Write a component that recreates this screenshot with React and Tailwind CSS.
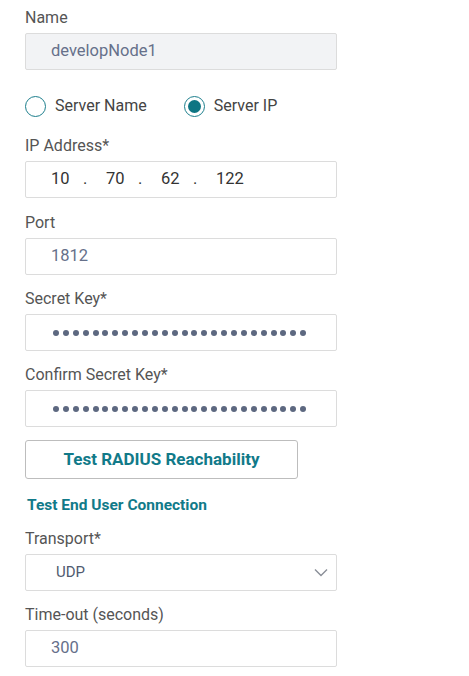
import React from "react";

const font = { fontFamily: "Roboto, 'Liberation Sans', sans-serif" };

function Label({ children }) {
  return <div className="h-5 text-[16px] leading-[23px] text-[#555]">{children}</div>;
}

function Field({ label, children, className = "" }) {
  return (
    <div className={`flex flex-col gap-[7px] ${className}`}>
      <Label>{label}</Label>
      {children}
    </div>
  );
}

function Box({ children, disabled = false, className = "" }) {
  return (
    <div
      className={`flex h-[37px] w-[312px] items-center rounded-[2px] border border-[#dcdcdc] pl-[25px] pr-3 text-[16.5px] ${
        disabled ? "bg-[#f2f3f5]" : "bg-white"
      } ${className}`}
    >
      {children}
    </div>
  );
}

function Radio({ checked, label }) {
  return (
    <label className="flex items-center gap-[9px]">
      <span className="flex h-[21px] w-[21px] items-center justify-center rounded-full border-[1.5px] border-[#1b7e8c]">
        {checked && <span className="h-[13px] w-[13px] rounded-full bg-[#0e7583]" />}
      </span>
      <span className="text-[16px] text-[#444]">{label}</span>
    </label>
  );
}

function Secret() {
  return (
    <Box>
      <div className="flex gap-[3.9px] pl-[2px]">
        {Array.from({ length: 26 }).map((_, i) => (
          <span key={i} className="h-[6px] w-[6px] rounded-full bg-[#5d6880]" />
        ))}
      </div>
    </Box>
  );
}

export default function App() {
  const ip = ["10", "70", "62", "122"];
  return (
    <div className="min-h-[676px] w-[469px] bg-white pl-[25px] pt-[6px]" style={font}>
      <Field label="Name">
        <Box disabled>
          <span className="text-[#66708a]">developNode1</span>
        </Box>
      </Field>

      <div className="mt-[24px] flex items-center gap-[37px]">
        <Radio label="Server Name" />
        <Radio checked label="Server IP" />
      </div>

      <Field label="IP Address*" className="mt-[16px]">
        <Box>
          <div className="flex text-[#333]">
            {ip.map((n, i) => (
              <div key={i} className="flex w-[55px]">
                <span className="w-[32px]">{n}</span>
                {i < 3 && <span>.</span>}
              </div>
            ))}
          </div>
        </Box>
      </Field>

      <Field label="Port" className="mt-[13px]">
        <Box>
          <span className="text-[#66708a]">1812</span>
        </Box>
      </Field>

      <Field label="Secret Key*" className="mt-[12px]">
        <Secret />
      </Field>

      <Field label="Confirm Secret Key*" className="mt-[12px]">
        <Secret />
      </Field>

      <button className="mt-[13px] flex h-[39px] w-[273px] items-center justify-center rounded-[3px] border border-[#bdbdbd] bg-white text-[17px] font-bold text-[#117a89]">
        Test RADIUS Reachability
      </button>

      <div className="mt-[16px] pl-[2px] text-[15.5px] font-bold leading-5 text-[#117a89]">
        Test End User Connection
      </div>

      <Field label="Transport*" className="mt-[12px]">
        <Box className="justify-between !pl-[30px] !pr-[8px]">
          <span className="text-[15px] text-[#505a70]">UDP</span>
          <svg width="14" height="9" viewBox="0 0 14 9" fill="none">
            <path d="M1 1.5 L7 7.5 L13 1.5" stroke="#8a8f98" strokeWidth="1.4" />
          </svg>
        </Box>
      </Field>

      <Field label="Time-out (seconds)" className="mt-[12px]">
        <Box>
          <span className="text-[#66708a]">300</span>
        </Box>
      </Field>
    </div>
  );
}
